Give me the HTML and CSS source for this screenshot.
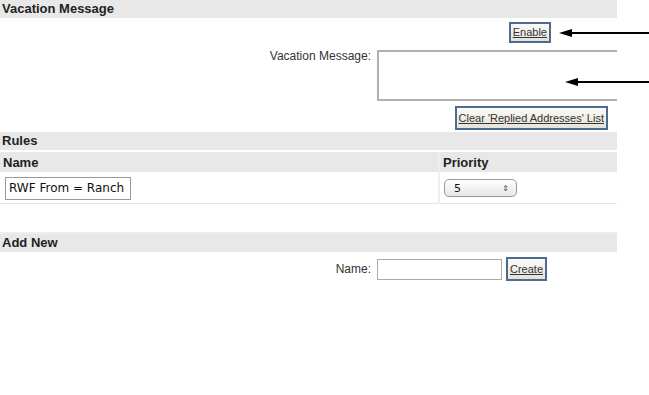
FILE: index.html
```html
<!DOCTYPE html>
<html lang="en">
<head>
    <meta charset="UTF-8">
    <title>Mail Settings</title>
    <link rel="stylesheet" href="styles.css">
</head>
<body>
    <div class="page">
        <div class="content">
            <!-- Vacation -->
            <h2 class="band">Vacation Message</h2>
            <div class="btn-row enable-row">
                <a class="btn" href="#">Enable</a>
            </div>
            <div class="field-row msg-row">
                <label>Vacation Message:</label>
                <textarea class="msg"></textarea>
            </div>
            <div class="btn-row clear-row">
                <a class="btn" href="#">Clear 'Replied Addresses' List</a>
            </div>

            <!-- Rules -->
            <h2 class="band">Rules</h2>
            <table class="rules">
                <tr class="head">
                    <th class="col-name">Name</th>
                    <th>Priority</th>
                </tr>
                <tr>
                    <td class="col-name"><input class="rule-name" type="text" value="RWF From = Ranch"></td>
                    <td><span class="select">5<span class="updown">&#8661;</span></span></td>
                </tr>
                <tr class="empty">
                    <td colspan="2"></td>
                </tr>
            </table>

            <!-- Add new -->
            <h2 class="band">Add New</h2>
            <div class="field-row add-row">
                <label>Name:</label>
                <input class="new-name" type="text">
                <a class="btn" href="#">Create</a>
            </div>
        </div>

        <svg class="arrow arrow-1" width="90" height="10" viewBox="0 0 90 10">
            <line x1="10" y1="5" x2="90" y2="5" stroke="#000" stroke-width="2"/>
            <polygon points="0,5 13,1 13,9" fill="#000"/>
        </svg>
        <svg class="arrow arrow-2" width="84" height="10" viewBox="0 0 84 10">
            <line x1="10" y1="5" x2="84" y2="5" stroke="#000" stroke-width="2"/>
            <polygon points="0,5 13,1 13,9" fill="#000"/>
        </svg>
    </div>
</body>
</html>
```

FILE: styles.css
```css
body {
    margin: 0;
    background: #fff;
    color: #222;
    font-family: "Liberation Sans", Arial, sans-serif;
    font-size: 12px;
}

.page {
    position: relative;
    width: 649px;
    height: 395px;
}

.content {
    width: 617px;
    overflow: hidden;
}

.band {
    margin: 0;
    height: 18px;
    line-height: 18px;
    padding-left: 2px;
    background: #e8e8e8;
    font-size: 13px;
    font-weight: bold;
    color: #222;
}

/* buttons */
.btn {
    display: inline-block;
    box-sizing: border-box;
    height: 22px;
    line-height: 19px;
    padding: 0 2px;
    border: 1px solid #4d6b91;
    background: linear-gradient(#fbfbf8, #e4e2d8);
    color: #333;
    font-size: 11px;
    text-decoration: underline;
}

.btn-row {
    display: flex;
    justify-content: flex-end;
}

.enable-row {
    padding: 4px 66px 0 0;
}

.enable-row .btn {
    height: 21px;
    border-width: 2px;
    line-height: 17px;
}

.clear-row {
    padding: 5px 9px 2px 0;
}

.clear-row .btn {
    height: 24px;
    line-height: 20px;
    border-width: 2px;
}

/* label + field rows */
.field-row {
    display: flex;
    align-items: flex-start;
}

.field-row label {
    width: 371px;
    flex-shrink: 0;
    text-align: right;
    color: #333;
    font-size: 12px;
}

.msg-row {
    margin-top: 6px;
}

.msg {
    box-sizing: border-box;
    flex-shrink: 0;
    width: 300px;
    height: 51px;
    margin: 1px 0 0 6px;
    border: 2px solid #b0b0b0;
    border-right: none;
    resize: none;
}

/* rules table */
.rules {
    width: 100%;
    border-collapse: collapse;
    margin-top: 2px;
    border-bottom: 2px solid #eee;
}

.rules th {
    height: 20px;
    padding: 0 3px;
    background: #e8e8e8;
    text-align: left;
    font-size: 13px;
    color: #222;
}

.rules td {
    height: 30px;
    padding: 0 3px;
    border-top: 1px solid #fff;
    border-bottom: 1px solid #e6e6e6;
}

.rules .col-name {
    width: 432px;
    border-right: 2px solid #eee;
}

.rules .empty td {
    height: 28px;
    border-right: none;
}

.rule-name {
    box-sizing: border-box;
    width: 126px;
    height: 23px;
    margin: 0 0 0 2px;
    padding: 0 3px;
    border: 1px solid #999;
    font-family: "DejaVu Sans", sans-serif;
    font-size: 12px;
    color: #111;
}

.select {
    display: inline-flex;
    justify-content: space-between;
    align-items: center;
    box-sizing: border-box;
    width: 73px;
    height: 18px;
    margin-left: 1px;
    padding: 0 7px 0 9px;
    border: 1px solid #999;
    border-radius: 5px;
    background: linear-gradient(#fff, #e6e6e6);
    font-family: "DejaVu Sans", sans-serif;
    font-size: 11px;
    color: #111;
}

.updown {
    font-size: 8px;
    color: #444;
}

/* add new */
.add-row {
    align-items: center;
    margin-top: 5px;
}

.new-name {
    box-sizing: border-box;
    width: 125px;
    height: 21px;
    margin: 0 4px 0 6px;
    border: 1px solid #aaa;
}

.add-row .btn {
    height: 24px;
    line-height: 21px;
    border-width: 2px;
}

/* annotation arrows */
.arrow {
    position: absolute;
}

.arrow-1 {
    left: 559px;
    top: 28px;
}

.arrow-2 {
    left: 565px;
    top: 77px;
}
```
